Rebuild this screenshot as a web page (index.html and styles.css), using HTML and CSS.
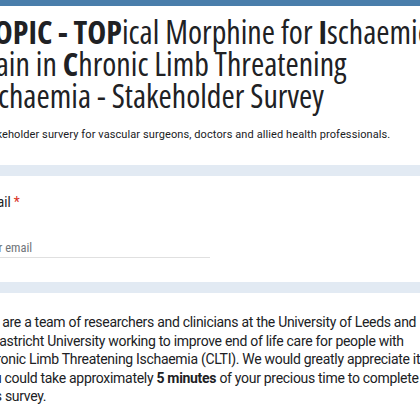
FILE: index.html
```html
<!DOCTYPE html>
<html lang="en">
<head>
    <meta charset="UTF-8">
    <meta name="viewport" content="width=device-width, initial-scale=1.0">
    <title>TOPIC - Stakeholder Survey</title>
    <link rel="stylesheet" href="styles.css">
</head>
<body>
    <div class="form">
        <!-- Header card -->
        <div class="card header-card">
            <h1 class="form-title">
                <b>TOPIC - TOP</b>ical Morphine for <b>I</b>schaemic<br>
                <b>P</b>ain in <b>C</b>hronic Limb Threatening<br>
                Ischaemia - Stakeholder Survey
            </h1>
            <div class="form-desc">Stakeholder survery for vascular surgeons, doctors and allied health professionals.</div>
        </div>

        <!-- Email question -->
        <div class="card question-card">
            <div class="question-title">Email <span class="required">*</span></div>
            <div class="text-input">Your email</div>
        </div>

        <!-- Intro text -->
        <div class="card text-card">
            <p class="intro">
                We are a team of researchers and clinicians at the University of Leeds and<br>
                Maastricht University working to improve end of life care for people with<br>
                Chronic Limb Threatening Ischaemia (CLTI). We would greatly appreciate it if<br>
                you could take approximately <b>5 minutes</b> of your precious time to complete<br>
                this survey.
            </p>
        </div>
    </div>
</body>
</html>
```

FILE: styles.css
```css
body {
    margin: 0;
    background: #e2eaf3;
    overflow: hidden;
    color: #202124;
}
.form {
    margin-left: -20px;
    width: 500px;
    display: flex;
    flex-direction: column;
    gap: 11px;
}
.card {
    background: #fff;
}
.header-card {
    border-top: 6px solid #4a7eab;
    padding: 10px 0 22px;
}
.form-title {
    margin: 0;
    font-family: "Open Sans", sans-serif;
    font-stretch: 75%;
    font-size: 32px;
    line-height: 32px;
    font-weight: 400;
    white-space: nowrap;
}
.form-title b {
    font-weight: 700;
}
.form-desc {
    margin-top: 15px;
    font-family: Roboto, sans-serif;
    font-size: 11px;
    letter-spacing: 0.1px;
    line-height: 16px;
}
.question-card {
    padding: 16px 0 24px;
}
.question-title {
    font-family: Roboto, sans-serif;
    font-stretch: 75%;
    font-size: 14px;
    line-height: 20px;
}
.required {
    color: #d93025;
}
.text-input {
    margin-top: 27px;
    width: 230px;
    font-family: Roboto, sans-serif;
    font-stretch: 75%;
    font-size: 12.5px;
    line-height: 17px;
    color: #70757a;
    padding-bottom: 1px;
    border-bottom: 1px solid #e0e0e0;
}
.text-card {
    padding: 20px 0 30px;
}
.intro {
    margin: 0;
    font-family: Roboto, sans-serif;
    font-size: 14px;
    letter-spacing: -0.3px;
    line-height: 18.5px;
    white-space: nowrap;
}
```
